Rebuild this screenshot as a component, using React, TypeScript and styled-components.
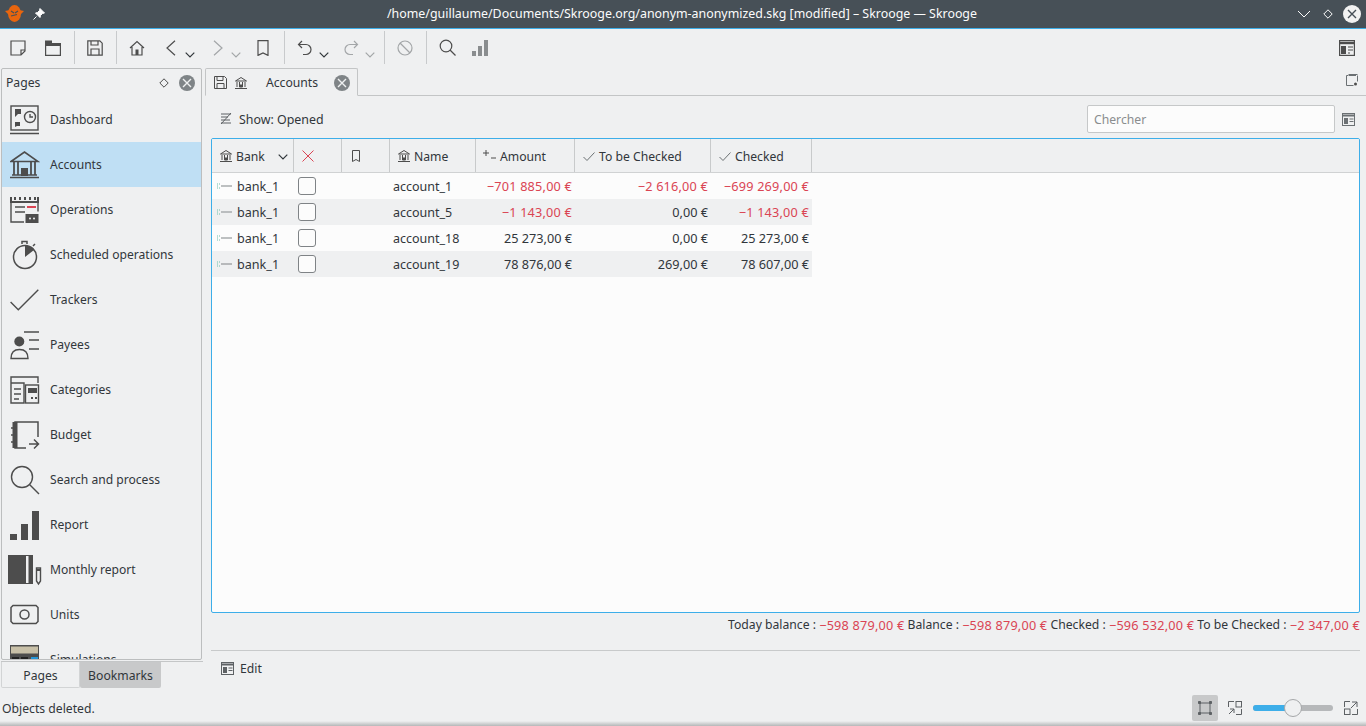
import React from "react";
import styled, { createGlobalStyle } from "styled-components";

const Global = createGlobalStyle`
  html, body { margin: 0; padding: 0; height: 100%; overflow: hidden; background: #eff0f1; }
  body { font-family: "Noto Sans", "Open Sans", sans-serif; font-size: 12.2px; color: #31363b; }
  #root { height: 100%; }
  * { box-sizing: border-box; }
`;

const Shell = styled.div`
  width: 1366px; height: 726px; display: flex; flex-direction: column; background: #eff0f1; overflow: hidden;
`;
const TitleBar = styled.header`
  height: 29px; flex: none; background: #475057; border-bottom: 1px solid #3daee9; display: flex; align-items: center;
  padding: 0 5px 1px 5px; color: #fcfcfc;
`;
const TitleLeft = styled.div`
  width: 60px; display: flex; align-items: center; gap: 9px;
`;
const TitleText = styled.div`
  flex: 1; text-align: center; font-size: 12.4px; padding-left: 4px; white-space: nowrap;
`;
const TitleRight = styled.div`
  display: flex; align-items: center; gap: 10px;
`;
const Toolbar = styled.div`
  height: 39px; flex: none; display: flex; align-items: center; padding: 2px 11px 4px 8px;
`;
const ToolGroup = styled.div<{ $w: number; $gap?: number }>`
  width: ${p => p.$w}px; height: 33px; flex: none; display: flex; align-items: center; gap: ${p => p.$gap ?? 0}px;
`;
const ToolSep = styled.div`
  width: 1px; height: 33px; background: #c8cacc; flex: none;
`;
const ToolBtn = styled.div<{ $w: number; $pad?: number }>`
  width: ${p => p.$w}px; height: 33px; flex: none; display: flex; align-items: center; justify-content: center; position: relative;
  padding-right: ${p => p.$pad ?? 0}px;
`;
const Spacer = styled.div`flex: 1;`;
const Body = styled.div`
  flex: 1; min-height: 0; display: flex;
`;
const SideColumn = styled.aside`
  width: 205px; flex: none; display: flex; flex-direction: column; padding-left: 1px;
`;
const Dock = styled.div`
  width: 201px; height: 592px; flex: none; border: 1px solid #bcbebf; border-radius: 2px; overflow: hidden; display: flex; flex-direction: column;
`;
const DockHead = styled.div`
  height: 27px; flex: none; display: flex; align-items: center; padding: 0 6px 0 4px;
`;
const DockTitle = styled.div`flex: 1;`;
const DockGap = styled.span`width: 10px; flex: none;`;
const NavList = styled.div`flex: 1; overflow: hidden; padding-top: 1px;`;
const NavItem = styled.div<{ $active?: boolean }>`
  height: 45px; display: flex; align-items: center; padding-left: 8px; gap: 10px; font-size: 12.1px;
  background: ${p => (p.$active ? "#bfdff4" : "transparent")};
`;
const NavIcon = styled.span`
  width: 30px; flex: none; display: flex; justify-content: center;
`;
const SideTabs = styled.div`
  height: 27px; margin-top: 1px; flex: none; display: flex; border-top: 1px solid #c4c6c7; width: 202px;
`;
const SideTab = styled.div<{ $active?: boolean; $w: number }>`
  width: ${p => p.$w}px; display: flex; align-items: center; justify-content: center;
  background: ${p => (p.$active ? "#eff0f1" : "#c8c9ca")};
  border: ${p => (p.$active ? "1px solid #d2d4d5" : "none")}; border-top: none; border-radius: 0 0 2px 2px;
  padding-top: ${p => (p.$active ? 1 : 0)}px;
`;
const Status = styled.div`
  flex: 1; display: flex; align-items: center; padding: 7px 0 0 1px;
`;
const Main = styled.main`
  flex: 1; min-width: 0; display: flex; flex-direction: column;
`;
const TabBar = styled.div`
  height: 28px; flex: none; display: flex; border-bottom: 1px solid #c3c5c6;
`;
const Tab = styled.div`
  width: 153px; height: 28px; flex: none; display: flex; align-items: center; padding: 1px 7px 0 8px;
  border: 1px solid #c3c5c6; border-bottom: 1px solid #eff0f1; border-radius: 2px 2px 0 0; background: #eff0f1;
`;
const TabLabel = styled.span`flex: 1; text-align: center; padding-left: 2px;`;
const TabIcons = styled.div`display: flex; gap: 7px; align-items: center;`;
const TabCorner = styled.div`margin-left: auto; padding: 6px 8px 0 0;`;
const FilterRow = styled.div`
  height: 41px; flex: none; display: flex; align-items: center; padding: 5px 11px 0 14px;
`;
const FilterBtn = styled.div`
  display: flex; align-items: center; gap: 6px; flex: 1; font-size: 12.4px;
`;
const SearchBox = styled.div`
  width: 248px; height: 28px; background: #fcfcfc; border: 1px solid #c6c8c9; border-radius: 2px; color: #8a8d8f;
  display: flex; align-items: center; padding-left: 6px; margin-right: 7px;
`;
const TableFrame = styled.div`
  margin: 1px 6px 0 6px; height: 475px; flex: none; background: #fcfcfc; border: 1px solid #3daee9; border-radius: 2px; overflow: hidden;
`;
const COLS = "82px 48px 48px 86px 99px 136px 101px";
const HeaderRow = styled.div`
  height: 34px; background: #eff0f1; border-bottom: 1px solid #d0d2d3; display: grid; grid-template-columns: ${COLS} 1fr;
`;
const HeadCell = styled.div<{ $plain?: boolean }>`
  display: flex; align-items: center; gap: 3px; padding: 1px 0 0 7px; position: relative;
  border-right: ${p => (p.$plain ? "none" : "1px solid #c8cacb")};
`;
const Caret = styled.span`position: absolute; right: 5px; top: 15px; display: flex;`;
const DataRow = styled.div<{ $alt?: boolean }>`
  height: 26px; width: 600px; display: grid; grid-template-columns: ${COLS}; align-items: center; font-size: 12.5px;
  background: ${p => (p.$alt ? "#eff0f1" : "#fcfcfc")};
`;
const BankCell = styled.div`display: flex; align-items: center; gap: 5px; padding-left: 4px; font-size: 12.6px;`;
const CheckCell = styled.div`padding-left: 4px; display: flex;`;
const Check = styled.div`
  width: 18px; height: 18px; border: 1px solid #7f8386; border-radius: 3px; background: #fcfcfc;
`;
const TextCell = styled.div`padding-left: 3px;`;
const Money = styled.div<{ $neg?: boolean }>`
  text-align: right; padding-right: 3px; white-space: nowrap; font-size: 12.7px;
  letter-spacing: ${p => (p.$neg ? "0.2px" : "0")};
  color: ${p => (p.$neg ? "#da4453" : "#31363b")};
`;
const Balance = styled.div`
  height: 38px; flex: none; border-bottom: 1px solid #c8cacb; margin: 0 6px; display: flex; justify-content: flex-end; align-items: flex-start;
  padding-top: 3px; white-space: pre;
`;
const Red = styled.span`color: #da4453; font-size: 12.7px; letter-spacing: 0.2px;`;
const EditRow = styled.div`
  height: 34px; flex: none; display: flex; align-items: center; gap: 6px; padding: 0 0 0 16px;
`;
const BottomRow = styled.div`
  flex: 1; display: flex; align-items: center; justify-content: flex-end; padding: 10px 2px 0 0;
`;
const ZoomBtn = styled.div<{ $on?: boolean }>`
  width: 26px; height: 26px; border-radius: 2px; display: flex; align-items: center; justify-content: center;
  background: ${p => (p.$on ? "#c8c9ca" : "transparent")};
  & + & { margin-left: 4px; }
`;
const Slider = styled.div`
  width: 80px; height: 6px; margin: 0 5px; border-radius: 3px; background: #b6b8ba; position: relative;
`;
const SliderFill = styled.div`
  position: absolute; left: 0; top: 0; height: 6px; width: 40px; border-radius: 3px 0 0 3px; background: #3daee9;
`;
const SliderKnob = styled.div`
  position: absolute; left: 31px; top: -6px; width: 18px; height: 18px; border-radius: 50%; background: #eff0f1; border: 1px solid #a5a7a9;
`;
const BottomShadow = styled.div`
  height: 5px; flex: none; background: linear-gradient(#eff0f1, #b5b7b8);
`;

const I = ({ s = 22, c = "#4d4d4d", w = 1, fill = "none", children }: { s?: number; c?: string; w?: number; fill?: string; children: React.ReactNode }) => (
  <svg width={s} height={s} viewBox={`0 0 ${s} ${s}`} fill={fill} stroke={c} strokeWidth={w} style={{ flex: "none", display: "block" }}>{children}</svg>
);

const Chevron = ({ c = "#31363b" }: { c?: string }) => (
  <svg width="10" height="6" viewBox="0 0 10 6" fill="none" stroke={c} strokeWidth="1.2" style={{ position: "absolute", right: 0, bottom: 6 }}><path d="M.7.7 5 5 9.3.7" /></svg>
);

const CloseDisc = ({ s = 16 }: { s?: number }) => (
  <svg width={s} height={s} viewBox="0 0 16 16" style={{ flex: "none", display: "block" }}>
    <circle cx="8" cy="8" r="8" fill="#7f8487" />
    <path d="M4 4l8 8M12 4l-8 8" stroke="#eff0f1" strokeWidth="1.4" />
  </svg>
);
const Diamond = ({ c = "#4d4d4d", s = 10 }: { c?: string; s?: number }) => (
  <svg width={s} height={s} viewBox="0 0 10 10" fill="none" stroke={c} style={{ flex: "none", display: "block" }}><path d="M5 .8 9.2 5 5 9.200.8 5z" /></svg>
);
const BankSmall = () => (
  <I s={14}><path d="M1.500 5 7 1.500 12.500 5zM1 12.500h12M3 6v5M5.500 6v5M8.500 6v5M11 6v5" /><rect x="5.500" y="8.500" width="3" height="3" fill="#4d4d4d" stroke="none" /></I>
);
const CheckSmall = () => <I s={14} c="#6b7073"><path d="M1.500 8 5 11.500 12.500 3.500" /></I>;
const BankMark = () => (
  <svg width="16" height="10" viewBox="0 0 16 10" fill="none" style={{ flex: "none", display: "block" }}>
    <path d="M1 3h3M1 5h2M1 7h3" stroke="#6fc0ac" strokeDasharray="1 1" />
    <path d="M5 5h11" stroke="#a9acae" strokeWidth="1.600" />
  </svg>
);
const PanelIcon = ({ c = "#5d6164" }: { c?: string }) => (
  <I s={13} c={c}><rect x=".5" y=".5" width="12" height="12" /><path d="M0 2.500h13" strokeWidth="2" /><rect x="2" y="5" width="4" height="6" fill={c} stroke="none" /><path d="M7.500 6h4M7.500 8.500h4" /></I>
);

const navIcons: Record<string, React.ReactNode> = {
  Dashboard: <I s={30} w={1.4}><rect x="1" y="1" width="27" height="24" /><path d="M0 28.500h29" /><path d="M5 4h6v5H8l-3 3zM5 17h5v4H7l-2 1z" fill="#4d4d4d" stroke="none" /><circle cx="20" cy="12" r="5.500" /><path d="M20 9v3h3" /></I>,
  Accounts: <I s={30} w={1.6}><path d="M1 11.500 14.500 2 28 11.500zM0 27.500h29M2 25h25" /><path d="M4 12v13M8 12v13M21 12v13M25 12v13" strokeWidth="1.800" /><rect x="11" y="18" width="7" height="8" fill="#4d4d4d" stroke="none" /></I>,
  Operations: <I s={30} w={1.4}><path d="M1 4.500V27h13M28 4.500v12" /><path d="M1 2v5h27V2M5 2v3M10 2v3M15 2v3M20 2v3M25 2v3" strokeWidth="2" /><path d="M5 12h10M5 17h10" /><path d="M17 12h9" stroke="#da4453" strokeWidth="2" /><rect x="15.500" y="19" width="13" height="9" fill="#4d4d4d" stroke="none" /><circle cx="20" cy="23.500" r="1" fill="#eff0f1" stroke="none" /><circle cx="24" cy="23.500" r="1" fill="#eff0f1" stroke="none" /></I>,
  "Scheduled operations": <I s={30} w={1.5}><circle cx="15" cy="17" r="11.500" /><path d="M15 17V5.500A11.500 11.500 0 0 1 24 10z" fill="#4d4d4d" stroke="none" /><path d="M12 4V1.500h5V4M23 6l2-2" /></I>,
  Trackers: <I s={30} w={1.4}><path d="M.6 17l7.700 7.800L28.300 4.800" /></I>,
  Payees: <I s={30} w={1.4}><circle cx="9.300" cy="11.500" r="5" fill="#4d4d4d" stroke="none" /><path d="M1 28.500c0-6 3.500-9 8.500-9s8.500 3 8.500 9zM14 2h15M19 10h10M19 19h10" /></I>,
  Categories: <I s={30} w={1.4}><path d="M1 8V2h27v6M1 8h13v20H1zM4 14h7M4 19h7M4 24h5" /><rect x="15.500" y="10" width="13" height="18" /><rect x="18" y="13" width="9" height="5" fill="#4d4d4d" stroke="none" /><path d="M21 23h2M25 23h2" strokeWidth="2" /></I>,
  Budget: <I s={30} w={1.5}><path d="M28 17V2H5v26h11" /><path d="M5 2v26" strokeWidth="5" /><path d="M1 8h3M1 15h3M1 22h3" /><path d="M19 24h9M24 19.500l4.500 4.500-4.500 4.500" /></I>,
  "Search and process": <I s={30} w={1.4}><circle cx="12" cy="12" r="10.500" /><path d="M19.500 19.500 29 29" /></I>,
  Report: <I s={30} c="none" fill="#4d4d4d"><rect x="0" y="24" width="7" height="6" /><rect x="11" y="14" width="7" height="16" /><rect x="22" y="1" width="7" height="29" /></I>,
  "Monthly report": <I s={34} w={1}><rect x="0" y="2" width="25" height="29" fill="#4d4d4d" stroke="none" /><rect x="18" y="3" width="2.500" height="27" fill="#eff0f1" stroke="none" /><path d="M28.500 15h4v13l-2 3-2-3z" strokeWidth="1.400" /><path d="M28 17h5" strokeWidth="2" /></I>,
  Units: <I s={30} w={1.5}><path d="M3 5.500h23l2 2v14l-2 2H3l-2-2v-14z" /><circle cx="14.500" cy="14.500" r="4.500" /></I>,
  Simulations: <I s={30} c="none"><rect x="0" y="0" width="29" height="30" fill="#4d4d4d" /><rect x="1" y="1.500" width="27" height="7" fill="#c8c0a8" /><rect x="2" y="12" width="7" height="8" fill="#222" /><rect x="11" y="12" width="7" height="8" fill="#222" /><rect x="21" y="12" width="7" height="8" fill="#2596d8" /></I>,
};
const pages = ["Dashboard", "Accounts", "Operations", "Scheduled operations", "Trackers", "Payees", "Categories", "Budget", "Search and process", "Report", "Monthly report", "Units", "Simulations"];

const rows = [
  ["account_1", "−701 885,00 €", "−2 616,00 €", "−699 269,00 €"],
  ["account_5", "−1 143,00 €", "0,00 €", "−1 143,00 €"],
  ["account_18", "25 273,00 €", "0,00 €", "25 273,00 €"],
  ["account_19", "78 876,00 €", "269,00 €", "78 607,00 €"],
];
const neg = (v: string) => v.startsWith("−");

export default function App() {
  return (
    <Shell>
      <Global />
      <TitleBar>
        <TitleLeft>
          <svg width="19" height="19" viewBox="0 0 19 19" style={{ flex: "none" }}>
            <ellipse cx="9.500" cy="9.500" rx="6.500" ry="8.500" fill="#e8650e" />
            <path d="M0 7l5-1v6zM19 7l-5-1v6z" fill="#e8650e" />
            <path d="M6 7l3 2M13 7l-3 2M6 12l6-1.500" stroke="#475057" strokeWidth="1.200" fill="none" />
          </svg>
          <svg width="12" height="12" viewBox="0 0 12 12" style={{ flex: "none" }}><path d="M7 .5l4.500 4.500-2 .5-2 2L7 9.500 2.500 5l2-.5 2-2zM3.500 8.500.5 11.500" fill="#fcfcfc" stroke="#fcfcfc" /></svg>
        </TitleLeft>
        <TitleText>/home/guillaume/Documents/Skrooge.org/anonym-anonymized.skg [modified] – Skrooge — Skrooge</TitleText>
        <TitleRight>
          <svg width="18" height="8" viewBox="0 0 18 8" fill="none" stroke="#fcfcfc"><path d="M3 1l6 6 6-6" /></svg>
          <Diamond c="#fcfcfc" />
          <svg width="18" height="18" viewBox="0 0 18 18"><circle cx="9" cy="9" r="9" fill="#f2f2f2" /><path d="M5 5l8 8M13 5l-8 8" stroke="#475057" strokeWidth="1.400" /></svg>
        </TitleRight>
      </TitleBar>
      <Toolbar>
        <ToolGroup $w={66} $gap={7}>
          <ToolBtn $w={20}><I s={16} w={1.2}><path d="M1 1h14v10l-4 4H1zM15 10h-4v5" /></I></ToolBtn>
          <ToolBtn $w={36}><I s={16} w={1.2}><path d="M.6 4V15.400h14.800V4z" /><path d="M0 .5h7v2.500h9v3H0z" fill="#4d4d4d" stroke="none" /></I></ToolBtn>
        </ToolGroup>
        <ToolSep />
        <ToolGroup $w={41}>
          <ToolBtn $w={40}><I s={16} w={1.2}><path d="M.8.8h12l2.400 2.400v12H.8zM4 1v4h7V1M4 15V9h8v6" /></I></ToolBtn>
        </ToolGroup>
        <ToolSep />
        <ToolGroup $w={167}>
          <ToolBtn $w={40}><I s={16} w={1.2}><path d="M1 8 8 1.500 15 8M3 7v8h10V7" /><rect x="6.500" y="9.500" width="3" height="5.500" fill="#4d4d4d" stroke="none" /></I></ToolBtn>
          <ToolBtn $w={38} $pad={11}><I s={16} w={1.2}><path d="M12 .8 4 8l8 7.200" /></I><Chevron /></ToolBtn>
          <ToolBtn $w={46} $pad={1}><I s={16} w={1.2} c="#a3a6a8"><path d="M4 .8 12 8l-8 7.200" /></I><Chevron c="#a3a6a8" /></ToolBtn>
          <ToolBtn $w={43}><I s={16} w={1.2}><path d="M3 .6h10v14.800l-5-2.500-5 2.500z" /></I></ToolBtn>
        </ToolGroup>
        <ToolSep />
        <ToolGroup $w={99}>
          <ToolBtn $w={44} $pad={4}><I s={16} w={1.2}><path d="M5 1 1.500 4.500 5 8M1.500 4.500H9a5 5 0 0 1 0 10H6" /></I><Chevron /></ToolBtn>
          <ToolBtn $w={46} $pad={2}><I s={16} w={1.2} c="#a3a6a8"><path d="M11 1l3.500 3.500L11 8M14.500 4.500H7a5 5 0 0 0 0 10h3" /></I><Chevron c="#a3a6a8" /></ToolBtn>
        </ToolGroup>
        <ToolSep />
        <ToolGroup $w={41}>
          <ToolBtn $w={40}><I s={16} w={1.2} c="#a3a6a8"><circle cx="8" cy="8" r="7" /><path d="M3 3l10 10" /></I></ToolBtn>
        </ToolGroup>
        <ToolSep />
        <ToolGroup $w={78}>
          <ToolBtn $w={40}><I s={17} w={1.2}><circle cx="7" cy="7" r="5.800" /><path d="M11 11l5.500 5.500" /></I></ToolBtn>
          <ToolBtn $w={26}><I s={17} c="none" fill="#8a8d8f"><rect x="0" y="12" width="4" height="5" /><rect x="6" y="7" width="4" height="10" /><rect x="12" y="1" width="4" height="16" /></I></ToolBtn>
        </ToolGroup>
        <Spacer />
        <I s={16} w={1.2}><rect x=".6" y=".6" width="14.800" height="14.800" /><path d="M0 3h16" strokeWidth="2.400" /><rect x="2" y="6" width="5" height="8" fill="#4d4d4d" stroke="none" /><path d="M9 7h5M9 10h5M9 13h2" /></I>
      </Toolbar>
      <Body>
        <SideColumn>
          <Dock>
            <DockHead>
              <DockTitle>Pages</DockTitle>
              <Diamond />
              <DockGap />
              <CloseDisc />
            </DockHead>
            <NavList>
              {pages.map(p => (
                <NavItem key={p} $active={p === "Accounts"}>
                  <NavIcon>{navIcons[p]}</NavIcon>
                  <span>{p}</span>
                </NavItem>
              ))}
            </NavList>
          </Dock>
          <SideTabs>
            <SideTab $active $w={79}>Pages</SideTab>
            <SideTab $w={81}>Bookmarks</SideTab>
          </SideTabs>
          <Status>Objects deleted.</Status>
        </SideColumn>
        <Main>
          <TabBar>
            <Tab>
              <TabIcons>
                <I s={13}><path d="M.5.5h10l2 2v10H.5zM3 1v3.500h6V1M3 12.500V7.500h7v5" /></I>
                <BankSmall />
              </TabIcons>
              <TabLabel>Accounts</TabLabel>
              <CloseDisc />
            </Tab>
            <TabCorner>
              <I s={12} c="#6b7073"><path d="M.5 1.500h2M.5 1.500v10h7M11.500 1.500v6M2.500.5h9" /><rect x="3" y="0" width="7" height="2" fill="#6b7073" stroke="none" /><circle cx="9.500" cy="10" r="1.500" fill="#4d4d4d" stroke="none" /></I>
            </TabCorner>
          </TabBar>
          <FilterRow>
            <FilterBtn>
              <I s={14} c="#5d6164"><path d="M2 2h10M2 5h7M2 8h9M2 11h10M12 1 2 12" /></I>
              Show: Opened
            </FilterBtn>
            <SearchBox>Chercher</SearchBox>
            <PanelIcon c="#6b7073" />
          </FilterRow>
          <TableFrame>
            <HeaderRow>
              <HeadCell><BankSmall />Bank<Caret><svg width="10" height="6" viewBox="0 0 10 6" fill="none" stroke="#31363b" strokeWidth="1.200"><path d="M.7.7 5 5 9.300.7" /></svg></Caret></HeadCell>
              <HeadCell><I s={14} c="#da4453"><path d="M1.500 1.500l11 11M12.500 1.500l-11 11" /></I></HeadCell>
              <HeadCell><I s={14}><path d="M3.500 1.500h7v11l-3.500-2-3.500 2z" /></I></HeadCell>
              <HeadCell><BankSmall />Name</HeadCell>
              <HeadCell><I s={14}><path d="M3 1v6M0 4h6M8 9h5" /></I>Amount</HeadCell>
              <HeadCell><CheckSmall />To be Checked</HeadCell>
              <HeadCell><CheckSmall />Checked</HeadCell>
              <HeadCell $plain />
            </HeaderRow>
            {rows.map((r, i) => (
              <DataRow key={r[0]} $alt={i % 2 === 1}>
                <BankCell><BankMark />bank_1</BankCell>
                <CheckCell><Check /></CheckCell>
                <span />
                <TextCell>{r[0]}</TextCell>
                <Money $neg={neg(r[1])}>{r[1]}</Money>
                <Money $neg={neg(r[2])}>{r[2]}</Money>
                <Money $neg={neg(r[3])}>{r[3]}</Money>
              </DataRow>
            ))}
          </TableFrame>
          <Balance>
            Today balance : <Red>−598 879,00 €</Red> Balance : <Red>−598 879,00 €</Red> Checked : <Red>−596 532,00 €</Red> To be Checked : <Red>−2 347,00 €</Red>
          </Balance>
          <EditRow>
            <PanelIcon />
            Edit
          </EditRow>
          <BottomRow>
            <ZoomBtn $on><I s={14} c="#5d6164"><rect x="2" y="2" width="10" height="10" /><path d="M.5.5h2v2h-2zM11.500.5h2v2h-2zM.5 11.500h2v2h-2zM11.500 11.500h2v2h-2z" fill="#5d6164" /></I></ZoomBtn>
            <ZoomBtn><I s={14} c="#5d6164"><path d="M6 .5H.5V6M8 13.500h5.500V8M1 13l5-5M2 8h4v4" /><rect x="8" y=".5" width="5.500" height="5.500" /></I></ZoomBtn>
            <Slider><SliderFill /><SliderKnob /></Slider>
            <ZoomBtn><I s={14} c="#5d6164"><path d="M6 .5H.5V6M8 13.500h5.500V8M7 7l6-6M8 1h5v5" /><rect x=".5" y="8" width="5.500" height="5.500" /></I></ZoomBtn>
          </BottomRow>
        </Main>
      </Body>
      <BottomShadow />
    </Shell>
  );
}
